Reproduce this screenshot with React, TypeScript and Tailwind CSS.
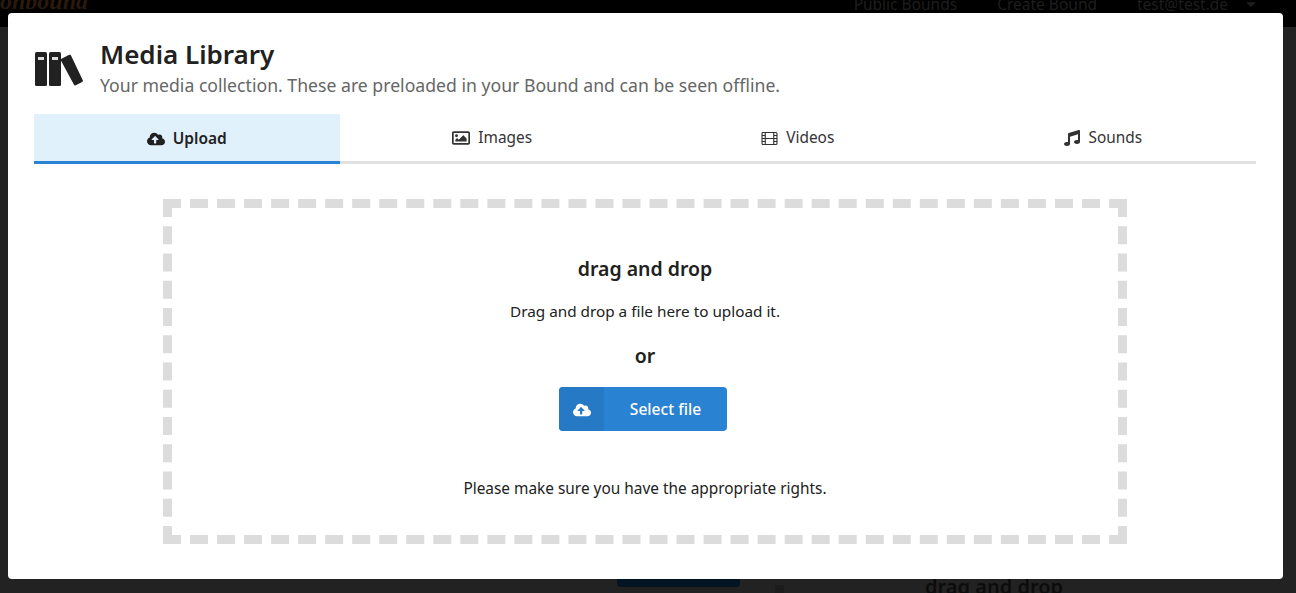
import React from 'react';
import { FaCaretDown, FaCloudUploadAlt, FaMusic, FaRegImage } from 'react-icons/fa';

const FilmIcon: React.FC<{ className?: string }> = ({ className }) => (
  <svg viewBox="0 0 18 15" className={className} fill="none" stroke="currentColor" strokeWidth="1.2">
    <rect x="1.100" y="1.100" width="15.800" height="12.800" rx="1" />
    <path d="M4.500 1v13M13.500 1v13M4.500 7.500h9M1 4.300h3.500M1 7.500h3.500M1 10.700h3.500M13.500 4.300H17M13.500 7.500H17M13.500 10.700H17" />
  </svg>
);

const TABS = [
  { label: 'Upload', icon: FaCloudUploadAlt, iconSize: 'size-[18px]', active: true },
  { label: 'Images', icon: FaRegImage, iconSize: 'size-[18px]', active: false },
  { label: 'Videos', icon: FilmIcon, iconSize: 'h-[15px] w-[17px]', active: false },
  { label: 'Sounds', icon: FaMusic, iconSize: 'size-[16px]', active: false },
];

const BooksIcon: React.FC = () => (
  <svg width="48" height="34" viewBox="0 0 48 34" className="shrink-0" fill="#212121">
    <rect x="0" y="0" width="12" height="34" rx="1.500" />
    <rect x="14" y="0" width="12" height="34" rx="1.500" />
    <path d="M26.500 6.700l7.800-3.900a1.300 1.300 0 0 1 1.700.6l11.800 24.800a1.300 1.300 0 0 1-.6 1.700l-6.500 3.400a1.300 1.300 0 0 1-1.700-.6L25.900 8.400a1.300 1.300 0 0 1 .6-1.700Z" />
    <rect x="3" y="5" width="6" height="3" fill="#dcdcdc" />
    <rect x="17" y="5" width="6" height="3" fill="#dcdcdc" />
  </svg>
);

// page that sits dimmed behind the modal
const Backdrop: React.FC = () => (
  <div className="absolute inset-0 overflow-hidden bg-[#222222]">
    <div className="flex h-[27px] items-start justify-between bg-black text-[15.500px] text-[#1e1e1e]">
      <span className="-mt-[16px] font-['Liberation_Serif',serif] text-[24px] leading-[34px] font-bold text-[#2a1a0e] italic">
        onbound
      </span>
      <div className="mr-[38px] flex -translate-y-[6px] items-center gap-10 leading-[20px]">
        <span>Public Bounds</span>
        <span>Create Bound</span>
        <span className="flex w-[121px] items-center justify-between">
          test@test.de
          <FaCaretDown className="size-[14px]" />
        </span>
      </div>
    </div>
    <div className="absolute top-[579px] left-[617px] h-2 w-[123px] rounded-b bg-[#031523]" />
    <div className="absolute top-[585px] left-[775px] h-2 w-[9px] bg-[#1c1c1c]" />
    <div className="absolute top-[572px] left-[925px] text-[20px] font-semibold text-[#0c0c0c]">
      drag and drop
    </div>
  </div>
);

export default function App() {
  return (
    <div className="relative h-[593px] overflow-hidden pt-[13px] pl-2 font-['Noto_Sans',sans-serif] text-[#212121]">
      <Backdrop />
      <div className="relative h-[566px] w-[1275px] rounded bg-white pt-[24px] pr-[27px] pl-[26px]">
        <div className="flex h-[77px] items-start gap-[17px] pl-px">
          <div className="pt-[15px]">
            <BooksIcon />
          </div>
          <div>
            <h1 className="-mt-px text-[26px] leading-[36px] font-semibold">Media Library</h1>
            <p className="mt-[2px] text-[17.650px] leading-[22px] text-[#666666]">
              Your media collection. These are preloaded in your Bound and can be seen offline.
            </p>
          </div>
        </div>

        <div className="grid h-[50px] grid-cols-4 border-b-[3px] border-[#e0e0e0]">
          {TABS.map((tab) => {
            const Icon = tab.icon;
            return (
              <div
                key={tab.label}
                className={
                  tab.active
                    ? '-mb-[3px] flex items-center justify-center gap-2 border-b-[3px] border-[#2a82d3] bg-[#e1f1fc] pt-[2px] text-[15.500px] font-semibold'
                    : 'flex items-center justify-center gap-2 pt-px text-[15.400px] text-[#333333]'
                }
              >
                <Icon className={tab.iconSize} />
                <span>{tab.label}</span>
              </div>
            );
          })}
        </div>

        <div className="mx-auto mt-[35px] flex h-[345px] w-[964px] flex-col items-center border-[9px] border-dashed border-[#dcdcdc] pt-[48px]">
          <div className="text-[19.500px] leading-[26px] font-semibold">drag and drop</div>
          <p className="mt-[19px] text-[15.300px] leading-[20px]">Drag and drop a file here to upload it.</p>
          <div className="mt-[22px] text-[19.500px] leading-[26px] font-semibold">or</div>
          <button className="mt-[18px] -ml-[4px] flex h-[44px] w-[168px] overflow-hidden rounded bg-[#2a82d3] text-[15.600px] font-medium text-white">
            <span className="flex h-full w-[45px] items-center justify-center bg-[#2679c5] pt-px">
              <FaCloudUploadAlt className="size-[18px]" />
            </span>
            <span className="flex h-full flex-1 items-center justify-center pt-px">Select file</span>
          </button>
          <p className="mt-[48px] text-[15.400px] leading-[20px]">Please make sure you have the appropriate rights.</p>
        </div>
      </div>
    </div>
  );
}
